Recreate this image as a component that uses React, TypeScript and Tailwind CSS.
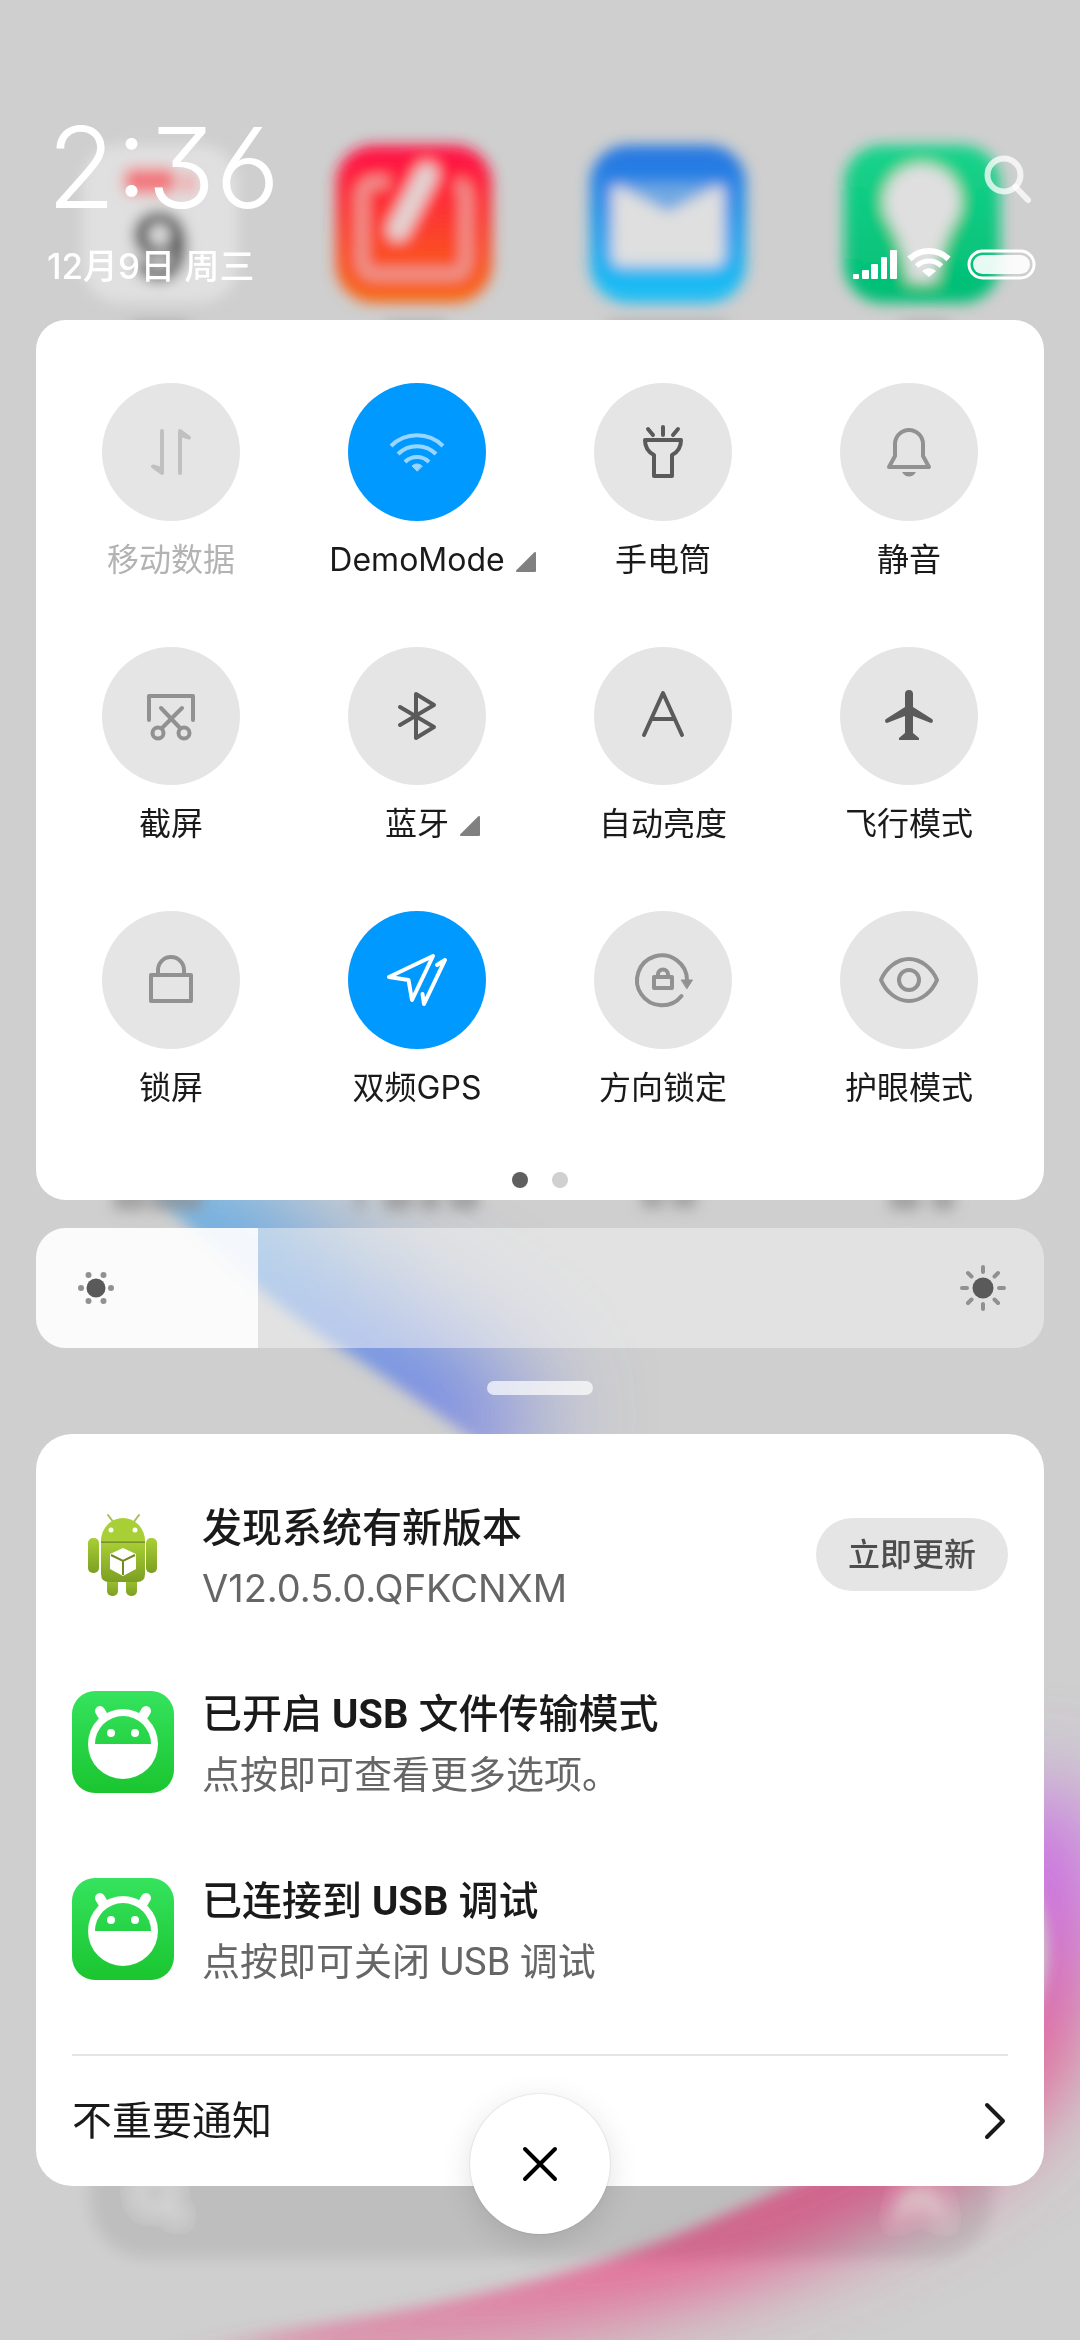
import { useState } from "react";
import type { ReactNode } from "react";

type Toggle = {
  label: string;
  icon: ReactNode;
  tone: string;
  active?: boolean;
  expandable?: boolean;
};

const toggles: Toggle[] = [
  {
    label: "移动数据",
    tone: "text-[#c0c0c0]",
    icon: <path d="M60 48V90L51 83.5L59 86M78 90V48L87 54.5L79 52" />,
  },
  {
    label: "DemoMode",
    tone: "text-[#99d6ff]",
    active: true,
    expandable: true,
    icon: (
      <>
        <path strokeLinecap="butt" d="M43 63a37 37 0 0 1 52 0M50 71a27 27 0 0 1 38 0M57 79a17 17 0 0 1 24 0" />
        <path fill="currentColor" strokeWidth="1" d="M69 88l-5-5a7 7 0 0 1 10 0z" />
      </>
    ),
  },
  {
    label: "手电筒",
    tone: "text-[#5a5a5a]",
    icon: <path d="M54 46L59 52M69 44V52M84 46L79 52M51 57H87C87 65 84 69 78 72V93H60V72C54 69 51 65 51 57Z" />,
  },
  {
    label: "静音",
    tone: "text-[#919191]",
    icon: (
      <>
        <path d="M55 61a14 14 0 0 1 28 0V73L89 84H49L55 73Z" />
        <path fill="currentColor" stroke="none" d="M62 89H76c-2 3-4 4.500-7 4.500s-5-1.500-7-4.500z" />
      </>
    ),
  },
  {
    label: "截屏",
    tone: "text-[#919191]",
    icon: (
      <>
        <path d="M47 73V49H91V73M59 61L78 81M80 61L60 81" />
        <circle cx="56" cy="86" r="5.5" />
        <circle cx="82" cy="86" r="5.5" />
      </>
    ),
  },
  {
    label: "蓝牙",
    tone: "text-[#5a5a5a]",
    expandable: true,
    icon: <path d="M52 60L86 80L68 91V47L86 58L52 78" />,
  },
  {
    label: "自动亮度",
    tone: "text-[#5a5a5a]",
    icon: <path d="M50 88L69 46L88 88M58 72H80" />,
  },
  {
    label: "飞行模式",
    tone: "text-[#5a5a5a]",
    icon: (
      <path
        fill="currentColor"
        stroke="none"
        d="M65 47a4 4 0 0 1 8 0V60L92 72c1.500 1 1 4-1 4L73 69V86L79 91V93H59V91L65 86V69L47 76c-2 0-2.500-3-1-4L65 60Z"
      />
    ),
  },
  {
    label: "锁屏",
    tone: "text-[#919191]",
    icon: <path d="M49 64H89V90H49ZM56 64V59a13 13 0 0 1 26 0V64" />,
  },
  {
    label: "双频GPS",
    tone: "text-white",
    active: true,
    icon: <path d="M41 66L85 45L64 89L60.500 69ZM89 54L97 49L76 93L74.500 83" />,
  },
  {
    label: "方向锁定",
    tone: "text-[#919191]",
    icon: (
      <>
        <path d="M87.500 85A25 25 0 1 1 93 69M60 66H78V77H60ZM64 65V63.500a5 5 0 0 1 10 0V65" />
        <path fill="currentColor" strokeWidth="1" d="M87.500 69H98.500L93 77.500Z" />
      </>
    ),
  },
  {
    label: "护眼模式",
    tone: "text-[#919191]",
    icon: (
      <>
        <path d="M41 69C46 57 57 48 69 48S92 57 97 69C92 81 81 90 69 90S46 81 41 69Z" />
        <circle cx="69" cy="69" r="10" />
      </>
    ),
  },
];

function Wallpaper() {
  return (
    <svg
      aria-hidden="true"
      className="absolute inset-0 h-full w-full"
      viewBox="0 0 1080 2340"
      preserveAspectRatio="xMidYMin slice"
    >
      <defs>
        <filter id="soft" x="-20%" y="-20%" width="140%" height="140%">
          <feGaussianBlur stdDeviation="7" />
        </filter>
        <filter id="wide" filterUnits="userSpaceOnUse" x="-200" y="900" width="1600" height="1700">
          <feGaussianBlur stdDeviation="42" />
        </filter>
        <filter id="wider" filterUnits="userSpaceOnUse" x="-200" y="900" width="1600" height="900">
          <feGaussianBlur stdDeviation="60" />
        </filter>
        <linearGradient id="note" x1="0" y1="0" x2="0" y2="1">
          <stop offset="0.1" stopColor="#ff1744" />
          <stop offset="1" stopColor="#f86a14" />
        </linearGradient>
        <linearGradient id="mail" x1="0" y1="0" x2="0" y2="1">
          <stop offset="0.1" stopColor="#2879e2" />
          <stop offset="0.9" stopColor="#1dbcf4" />
        </linearGradient>
        <linearGradient id="bulb" x1="0" y1="0" x2="0" y2="1">
          <stop offset="0" stopColor="#18d38b" />
          <stop offset="1" stopColor="#00bd74" />
        </linearGradient>
        <linearGradient id="blue" gradientUnits="userSpaceOnUse" x1="0" y1="1180" x2="0" y2="1460">
          <stop offset="0" stopColor="#4fb2e6" />
          <stop offset="1" stopColor="#6a6ee8" />
        </linearGradient>
        <linearGradient id="pink" gradientUnits="userSpaceOnUse" x1="0" y1="1760" x2="0" y2="2340">
          <stop offset="0" stopColor="#c95bea" stopOpacity="0" />
          <stop offset="0.15" stopColor="#c95bea" />
          <stop offset="0.28" stopColor="#cf62d8" />
          <stop offset="0.48" stopColor="#e5558f" />
          <stop offset="0.85" stopColor="#e85589" />
          <stop offset="1" stopColor="#e85589" stopOpacity="0.5" />
        </linearGradient>
        <clipPath id="blueSide">
          <path d="M130 1170Q250 1290 340 1348T500 1460H1080V1100H100Z" />
        </clipPath>
        <clipPath id="pinkSide">
          <path d="M150 2345Q500 2310 700 2225T980 2080Q1080 1990 1030 1880V1600H1200V2400H150Z" />
        </clipPath>
      </defs>
      <g filter="url(#soft)">
        <g clipPath="url(#blueSide)">
          <path d="M130 1170Q250 1290 340 1348T500 1460" fill="none" stroke="url(#blue)" strokeWidth="130" filter="url(#wider)" />
        </g>
        <g clipPath="url(#pinkSide)">
          <path
            d="M250 2350Q500 2310 700 2240T990 2090Q1070 1990 1040 1880V1740"
            fill="none"
            stroke="url(#pink)"
            strokeWidth="100"
            filter="url(#wide)"
          />
        </g>
      </g>
      <g filter="url(#soft)">
        <rect x="82" y="145" width="156" height="158" rx="38" fill="#e0e0e0" />
        <rect x="124" y="168" width="52" height="26" rx="8" fill="#f2777c" />
        <rect x="182" y="172" width="14" height="22" rx="6" fill="#f2a5a8" />
        <text x="160" y="280" textAnchor="middle" fontSize="92" fontWeight="700" fill="#3c3c3c" fontFamily="Inter">
          9
        </text>
        <rect x="336" y="145" width="156" height="158" rx="38" fill="url(#note)" />
        <path d="M388 182H376q-14 0-14 14v64q0 14 14 14h76q14 0 14-14v-64q0-8-8-14" fill="none" stroke="#e9a09c" strokeWidth="10" />
        <path d="M427 174L398 230" stroke="#e2d4d4" strokeWidth="22" strokeLinecap="round" />
        <rect x="590" y="145" width="156" height="158" rx="38" fill="url(#mail)" />
        <path d="M612 186H724V256q0 10-10 10H622q-10 0-10-10Z" fill="#dfdfdf" />
        <path d="M614 184H722L668 212Z" fill="#6fa9e2" />
        <rect x="844" y="145" width="156" height="158" rx="38" fill="url(#bulb)" />
        <path d="M922 164a38 38 0 0 1 34 56Q940 246 936 282H908Q904 246 888 220A38 38 0 0 1 922 164Z" fill="#dfdfdf" />
        <g fill="#8d8d8d">
          <path d="M130 322h60v12h-60zM384 322h62v12h-62zM608 322h120v12H608zM900 322h50v12h-50z" opacity="0.6" />
          <path d="M114 1188h32v22h-32zM150 1188h52v22h-52z" opacity="0.7" />
          <path d="M356 1188h8v22h-8zM384 1188h28v22h-28zM420 1188h20v22h-20zM450 1188h28v22h-28z" opacity="0.7" />
          <path d="M642 1188h22v20h-22zM672 1188h24v20h-24z" opacity="0.7" />
          <path d="M890 1188h30v22h-30zM932 1188h22v22h-22z" opacity="0.7" />
        </g>
        <rect x="90" y="2100" width="902" height="158" rx="58" fill="#000" fillOpacity="0.08" />
        <circle cx="155" cy="2192" r="16" fill="none" stroke="#d9d9d9" strokeWidth="6" />
        <path d="M166 2204L180 2218" stroke="#d9d9d9" strokeWidth="7" />
        <path d="M894 2225q0-40 26-40t26 40q-10-12-26-12t-26 12z" fill="#e0c3cb" fillOpacity="0.8" />
      </g>
    </svg>
  );
}

function StatusHeader() {
  return (
    <header className="flex justify-between pt-[112px] pr-2 pb-[34px] pl-[11px] text-white">
      <div>
        <div className="text-[112px] leading-[110px] font-light [font-feature-settings:'cv03','cv09']">2:36</div>
        <div className="mt-6 text-[35px] leading-10 font-medium">12月9日 周三</div>
      </div>
      <div className="flex flex-col items-end justify-between pt-[42px]">
        <button type="button" aria-label="搜索" className="mr-0.5 text-white/75">
          <svg width="50" height="52" viewBox="0 0 50 52" fill="none" stroke="currentColor" strokeWidth="6">
            <circle cx="20" cy="21" r="16.500" />
            <path d="M31.500 33L44 46" strokeLinecap="round" />
          </svg>
        </button>
        <div className="mb-[6px] flex items-end">
          <svg width="44" height="32" viewBox="0 0 44 32" fill="currentColor" aria-label="信号">
            <rect x="0" y="26" width="6" height="5" rx="1" />
            <rect x="9" y="22" width="7" height="9" rx="1" />
            <rect x="18" y="16" width="7" height="15" rx="1" />
            <rect x="28" y="9" width="6" height="22" rx="1" />
            <rect x="37" y="2" width="7" height="29" rx="1" />
          </svg>
          <svg className="ml-[10px]" width="44" height="32" viewBox="0 0 44 32" fill="none" stroke="currentColor" aria-label="WLAN">
            <path d="M2.500 11a28 28 0 0 1 39 0" strokeWidth="6" />
            <path d="M9.500 18a18 18 0 0 1 25 0" strokeWidth="5" />
            <path d="M22 29l-7-6a10 10 0 0 1 14 0z" fill="currentColor" stroke="none" />
          </svg>
          <svg className="ml-4" width="69" height="32" viewBox="0 0 69 32" fill="none" aria-label="电量">
            <rect x="2" y="3" width="65" height="27" rx="13.500" stroke="currentColor" strokeWidth="3" />
            <rect x="6" y="7" width="57" height="19" rx="9.500" fill="currentColor" fillOpacity="0.9" />
          </svg>
        </div>
      </div>
    </header>
  );
}

function ToggleTile({ toggle }: { toggle: Toggle }) {
  const { label, icon, tone, active, expandable } = toggle;
  return (
    <button type="button" aria-pressed={!!active} className="flex flex-col items-center">
      <span className={`size-[138px] rounded-full ${active ? "bg-[#0099ff]" : "bg-[#e5e5e5]"} ${tone}`}>
        <svg
          viewBox="0 0 138 138"
          fill="none"
          stroke="currentColor"
          strokeWidth="4"
          strokeLinecap="round"
          strokeLinejoin="round"
        >
          {icon}
        </svg>
      </span>
      <span className={`relative mt-[15px] text-[32px] leading-[48px] ${label === "移动数据" ? "text-[#b3b3b3]" : "text-[#1a1a1a]"}`}>
        {label}
        {expandable && (
          <svg className="absolute bottom-3 left-full ml-[10px]" width="21" height="21" viewBox="0 0 21 21">
            <path d="M2 20H20V2Z" fill="#808080" stroke="#808080" strokeWidth="2" strokeLinejoin="round" />
          </svg>
        )}
      </span>
    </button>
  );
}

function BrightnessSlider() {
  const [level, setLevel] = useState(22);
  return (
    <label className="relative mt-7 flex h-[120px] items-center justify-between overflow-hidden rounded-[30px] bg-[#f5f5f5]/50 px-[38px]">
      <span className="absolute inset-y-0 left-0 bg-white/85" style={{ width: `${level}%` }} />
      <svg className="relative" width="44" height="44" viewBox="-22 -22 44 44" fill="#919191">
        <circle r="9.500" fill="#5a5a5a" />
        <circle cx="-15" r="3" />
        <circle cx="15" r="3" />
        <circle cx="-7.500" cy="-13" r="3" />
        <circle cx="7.500" cy="-13" r="3" />
        <circle cx="-7.500" cy="13" r="3" />
        <circle cx="7.500" cy="13" r="3" />
      </svg>
      <svg className="relative" width="46" height="46" viewBox="-23 -23 46 46" stroke="#919191" strokeWidth="4" strokeLinecap="round">
        <circle r="10.500" fill="#5a5a5a" stroke="none" />
        <path d="M0-21V-16M0 21V16M-21 0H-16M21 0H16M-15-15L-11.500-11.500M15 15L11.500 11.500M-15 15L-11.500 11.500M15-15L11.500-11.500" />
      </svg>
      <input
        type="range"
        aria-label="亮度"
        min={0}
        max={100}
        value={level}
        onChange={(e) => setLevel(Number(e.target.value))}
        className="absolute inset-0 h-full w-full opacity-0"
      />
    </label>
  );
}

function UpdaterIcon() {
  return (
    <svg width="102" height="102" viewBox="0 0 102 102">
      <defs>
        <linearGradient id="droid" x1="0" y1="0" x2="0" y2="1">
          <stop offset="0" stopColor="#a8cf35" />
          <stop offset="1" stopColor="#7d9f22" />
        </linearGradient>
      </defs>
      <path d="M36 11L42 19M67 11L61 19" stroke="#a3bf5a" strokeWidth="2" strokeLinecap="round" />
      <g fill="url(#droid)">
        <rect x="35" y="70" width="11" height="22" rx="5" />
        <rect x="54" y="70" width="11" height="22" rx="5" />
        <path d="M29 37a22 23 0 0 1 44 0z" fill="#a8cf35" />
        <path d="M29 38H73V70q0 8-8 8H37q-8 0-8-8Z" />
        <rect x="16" y="34" width="11" height="35" rx="5" />
        <rect x="74" y="34" width="11" height="35" rx="5" />
      </g>
      <path d="M29 38H73" stroke="#6b7d2a" strokeWidth="1.500" />
      <circle cx="39" cy="26" r="2.500" fill="#fff" />
      <circle cx="63" cy="26" r="2.500" fill="#fff" />
      <path d="M51 44L64 50V65L51 72L38 65V50Z" fill="#fff" />
      <path d="M39 51L51 57L63 51M51 57V71" fill="none" stroke="#6f8a1f" strokeWidth="2" />
    </svg>
  );
}

function UsbIcon() {
  return (
    <svg width="102" height="102" viewBox="0 0 102 102">
      <defs>
        <linearGradient id="usb" gradientUnits="userSpaceOnUse" x1="0" y1="0" x2="0" y2="102">
          <stop offset="0" stopColor="#35e35e" />
          <stop offset="1" stopColor="#1ac52f" />
        </linearGradient>
      </defs>
      <rect width="102" height="102" rx="23" fill="url(#usb)" />
      <path d="M28 20L34 30M74 20L68 30" stroke="#fff" strokeWidth="10" strokeLinecap="round" />
      <circle cx="51" cy="53" r="35" fill="#fff" />
      <path d="M23 53a28 28 0 0 1 56 0z" fill="url(#usb)" />
      <circle cx="39" cy="42" r="4" fill="#fff" />
      <circle cx="63" cy="42" r="4" fill="#fff" />
    </svg>
  );
}

const usb = <b className="font-bold">USB</b>;

const notifications = [
  {
    id: "update",
    title: "发现系统有新版本",
    body: "V12.0.5.0.QFKCNXM",
    icon: <UpdaterIcon />,
    action: "立即更新",
    font: "font-['Inter','Noto_Sans_CJK_SC',sans-serif]",
  },
  {
    id: "usb-transfer",
    title: <>已开启 {usb} 文件传输模式</>,
    body: "点按即可查看更多选项。",
    icon: <UsbIcon />,
    font: "font-['Roboto','Noto_Sans_CJK_SC',sans-serif]",
  },
  {
    id: "usb-debug",
    title: <>已连接到 {usb} 调试</>,
    body: "点按即可关闭 USB 调试",
    icon: <UsbIcon />,
    font: "font-['Roboto','Noto_Sans_CJK_SC',sans-serif]",
  },
];

export default function App() {
  return (
    <main
      lang="zh-CN"
      className="relative flex min-h-screen flex-col overflow-hidden bg-[#cfcfcf] px-9 font-['Inter','Noto_Sans_CJK_SC',sans-serif]"
    >
      <Wallpaper />
      <div className="relative flex flex-col">
        <StatusHeader />

        <section className="rounded-[30px] bg-white px-3 pt-[63px] pb-3">
          <div className="grid grid-cols-4 gap-y-[63px]">
            {toggles.map((toggle) => (
              <ToggleTile key={toggle.label} toggle={toggle} />
            ))}
          </div>
          <div className="mt-[60px] flex justify-center gap-6">
            <span className="size-4 rounded-full bg-[#5f5f5f]" />
            <span className="size-4 rounded-full bg-[#d0d0d0]" />
          </div>
        </section>

        <BrightnessSlider />

        <div className="mt-[33px] h-[14px] w-[106px] self-center rounded-full bg-white/70" />

        <section className="relative mt-[39px] rounded-[36px] bg-white px-9 pt-[27px]">
          <ul>
            {notifications.map((item) => (
              <li key={item.id} className={`flex h-[187px] items-center ${item.font}`}>
                {item.icon}
                <div className="ml-7 flex-1 pt-1.5">
                  <h2 className="text-[40px] leading-[60px] font-medium text-[#1a1a1a]">{item.title}</h2>
                  <p className="text-[38px] leading-[60px] text-[#666666]">{item.body}</p>
                </div>
                {item.action && (
                  <button type="button" className="h-[73px] rounded-full bg-[#e5e5e5] px-8 text-[32px] font-medium text-[#4d4d4d]">
                    {item.action}
                  </button>
                )}
              </li>
            ))}
          </ul>
          <button
            type="button"
            className="mt-8 flex h-[132px] w-full items-center justify-between border-t-2 border-[#e5e5e5] text-[40px] text-[#1a1a1a]"
          >
            不重要通知
            <svg width="28" height="40" viewBox="0 0 28 40" fill="none" stroke="currentColor" strokeWidth="4" strokeLinecap="round" strokeLinejoin="round">
              <path d="M7 4L23 20L7 36" />
            </svg>
          </button>
          <button
            type="button"
            aria-label="清除全部"
            className="absolute -bottom-12 left-1/2 flex size-[140px] -translate-x-1/2 items-center justify-center rounded-full bg-white shadow-[0_8px_32px_rgba(0,0,0,0.12),0_0_2px_rgba(0,0,0,0.2)]"
          >
            <svg width="36" height="36" viewBox="0 0 36 36" stroke="#000" strokeWidth="4" strokeLinecap="round">
              <path d="M3 3L33 33M33 3L3 33" />
            </svg>
          </button>
        </section>
      </div>
    </main>
  );
}
